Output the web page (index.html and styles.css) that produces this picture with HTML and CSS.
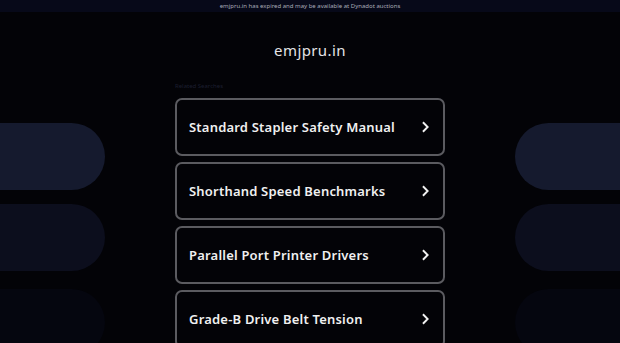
FILE: index.html
```html
<!DOCTYPE html>
<html lang="en">
<head>
    <meta charset="UTF-8">
    <meta name="viewport" content="width=device-width, initial-scale=1.0">
    <title>emjpru.in</title>
    <link rel="stylesheet" href="styles.css">
</head>
<body>
    <div class="top-bar">emjpru.in has expired and may be available at Dynadot auctions</div>

    <div class="page">
        <div class="side side-left">
            <div class="pill pill-1"></div>
            <div class="pill pill-2"></div>
            <div class="pill pill-3"></div>
        </div>

        <main class="center">
            <h1 class="domain">emjpru.in</h1>
            <p class="related">Related Searches</p>
            <div class="links">
                <a class="link" href="#"><span>Standard Stapler Safety Manual</span><svg viewBox="0 0 10 14" width="9" height="12"><path d="M2 1.5 L7.5 7 L2 12.5" fill="none" stroke="#f2f2f2" stroke-width="2.2"/></svg></a>
                <a class="link" href="#"><span>Shorthand Speed Benchmarks</span><svg viewBox="0 0 10 14" width="9" height="12"><path d="M2 1.5 L7.5 7 L2 12.5" fill="none" stroke="#f2f2f2" stroke-width="2.2"/></svg></a>
                <a class="link" href="#"><span>Parallel Port Printer Drivers</span><svg viewBox="0 0 10 14" width="9" height="12"><path d="M2 1.5 L7.5 7 L2 12.5" fill="none" stroke="#f2f2f2" stroke-width="2.2"/></svg></a>
                <a class="link" href="#"><span>Grade-B Drive Belt Tension</span><svg viewBox="0 0 10 14" width="9" height="12"><path d="M2 1.5 L7.5 7 L2 12.5" fill="none" stroke="#f2f2f2" stroke-width="2.2"/></svg></a>
            </div>
        </main>

        <div class="side side-right">
            <div class="pill pill-1"></div>
            <div class="pill pill-2"></div>
            <div class="pill pill-3"></div>
        </div>
    </div>
</body>
</html>
```

FILE: styles.css
```css
* {
    margin: 0;
    padding: 0;
    box-sizing: border-box;
}

body {
    background-color: #030307;
    font-family: 'Noto Sans', 'DejaVu Sans', sans-serif;
    color: #e6e6e6;
    height: 343px;
    overflow: hidden;
}

.top-bar {
    height: 12px;
    line-height: 12px;
    background-color: #070919;
    color: #a9abb8;
    font-size: 6px;
    text-align: center;
}

.page {
    display: grid;
    grid-template-columns: 175px 270px 175px;
}

.side {
    display: flex;
    flex-direction: column;
    padding-top: 111px;
}

.pill {
    height: 67px;
    width: 105px;
}

.side-left .pill {
    border-radius: 0 34px 34px 0;
}

.side-right .pill {
    margin-left: 70px;
    border-radius: 34px 0 0 34px;
}

.pill-1 {
    background-color: #151a2e;
}

.pill-2 {
    margin-top: 14px;
    background-color: #0c0e1d;
}

.pill-3 {
    margin-top: 18px;
    background-color: #05060f;
}

.center {
    display: flex;
    flex-direction: column;
}

.domain {
    margin-top: 28px;
    font-size: 15px;
    font-weight: normal;
    text-align: center;
    color: #e3e3e6;
    letter-spacing: 0.4px;
}

.related {
    margin-top: 22px;
    font-size: 6px;
    color: #1c1f30;
}

.links {
    margin-top: 8px;
    display: flex;
    flex-direction: column;
    gap: 6px;
}

.link {
    height: 58px;
    display: flex;
    align-items: center;
    justify-content: space-between;
    padding: 0 13px 0 12px;
    border: 2px solid #5b5b60;
    border-radius: 7px;
    color: #f0f0f0;
    text-decoration: none;
    font-size: 13px;
    font-weight: 600;
    letter-spacing: 0.2px;
}
```
